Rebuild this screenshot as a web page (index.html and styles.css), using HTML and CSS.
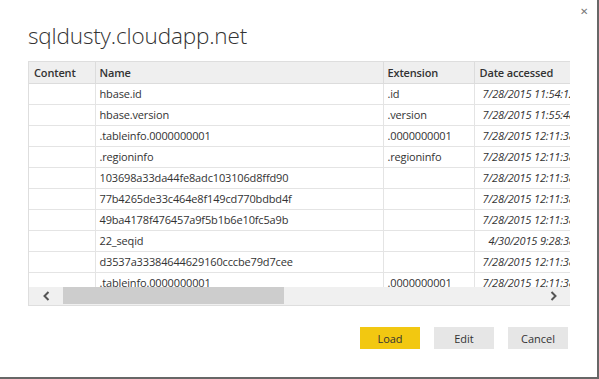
FILE: index.html
```html
<!DOCTYPE html>
<html lang="en">
<head>
  <meta charset="UTF-8" />
  <title>sqldusty.cloudapp.net</title>
  <link rel="stylesheet" href="styles.css">
</head>
<body>
  <div class="dialog">
    <button class="close-btn" title="Close">&#x2715;</button>
    <h1 class="title">sqldusty.cloudapp.net</h1>

    <div class="grid">
      <div class="grid-view">
        <table class="files">
          <thead>
            <tr>
              <th class="col-content">Content</th>
              <th class="col-name">Name</th>
              <th class="col-ext">Extension</th>
              <th class="col-date">Date accessed</th>
            </tr>
          </thead>
          <tbody>
            <tr><td></td><td>hbase.id</td><td>.id</td><td class="date">7/28/2015 11:54:12 AM</td></tr>
            <tr><td></td><td>hbase.version</td><td>.version</td><td class="date">7/28/2015 11:55:48 AM</td></tr>
            <tr><td></td><td>.tableinfo.0000000001</td><td>.0000000001</td><td class="date">7/28/2015 12:11:38 PM</td></tr>
            <tr><td></td><td>.regioninfo</td><td>.regioninfo</td><td class="date">7/28/2015 12:11:38 PM</td></tr>
            <tr><td></td><td>103698a33da44fe8adc103106d8ffd90</td><td></td><td class="date">7/28/2015 12:11:38 PM</td></tr>
            <tr><td></td><td>77b4265de33c464e8f149cd770bdbd4f</td><td></td><td class="date">7/28/2015 12:11:38 PM</td></tr>
            <tr><td></td><td>49ba4178f476457a9f5b1b6e10fc5a9b</td><td></td><td class="date">7/28/2015 12:11:38 PM</td></tr>
            <tr><td></td><td>22_seqid</td><td></td><td class="date">4/30/2015 9:28:38 AM</td></tr>
            <tr><td></td><td>d3537a33384644629160cccbe79d7cee</td><td></td><td class="date">7/28/2015 12:11:38 PM</td></tr>
            <tr><td></td><td>.tableinfo.0000000001</td><td>.0000000001</td><td class="date">7/28/2015 12:11:38 PM</td></tr>
          </tbody>
        </table>
      </div>

      <!-- horizontal scrollbar -->
      <div class="hscroll">
        <span class="arrow">
          <svg width="9" height="10" viewBox="0 0 9 10"><path d="M6.5 1 L2.5 5 L6.5 9" fill="none" stroke="#555" stroke-width="2"/></svg>
        </span>
        <div class="track"><div class="thumb"></div></div>
        <span class="arrow">
          <svg width="9" height="10" viewBox="0 0 9 10"><path d="M2.5 1 L6.5 5 L2.5 9" fill="none" stroke="#555" stroke-width="2"/></svg>
        </span>
      </div>
    </div>

    <div class="actions">
      <button class="btn btn-primary">Load</button>
      <button class="btn">Edit</button>
      <button class="btn">Cancel</button>
    </div>
  </div>
</body>
</html>
```

FILE: styles.css
```css
* {
  box-sizing: border-box;
  margin: 0;
  padding: 0;
}

body, html {
  height: 100%;
  background: #fff;
  font-family: 'Open Sans', 'Noto Sans', sans-serif;
  color: #333;
  overflow: hidden;
}

.dialog {
  position: relative;
  width: 599px;
  height: 379px;
  border-right: 2px solid #676767;
  border-bottom: 2px solid #676767;
  padding: 0 29px 0 28px;
}

.close-btn {
  position: absolute;
  top: 5px;
  right: 9px;
  border: none;
  background: none;
  color: #777;
  font-size: 10px;
  line-height: 14px;
  cursor: pointer;
}

.title {
  font-weight: 300;
  font-size: 22.5px;
  line-height: 30px;
  color: #333;
  padding-top: 21px;
  height: 61px;
  letter-spacing: -0.15px;
}

/* Grid */
.grid {
  width: 542px;
  border: 1px solid #dedede;
  border-right: none;
}

.grid-view {
  height: 225px;
  overflow: hidden;
}

.files {
  border-collapse: collapse;
  table-layout: fixed;
  width: 582px;
  font-size: 11px;
  letter-spacing: -0.15px;
}

.files th,
.files td {
  height: 21px;
  padding: 0 4px;
  text-align: left;
  white-space: nowrap;
  overflow: hidden;
  border-right: 1px solid #e4e4e4;
  border-bottom: 1px solid #e4e4e4;
}

.files th {
  background: #efefef;
  font-weight: 600;
  color: #333;
  border-right-color: #dcdcdc;
  border-bottom-color: #dcdcdc;
}

.files td {
  color: #333;
}

.col-content { width: 66px; padding-left: 5px !important; }
.col-name { width: 288px; }
.col-ext { width: 91px; }
.col-date { width: 137px; padding-left: 5px !important; }

.files td.date {
  font-style: italic;
  text-align: right;
  padding-right: 18px;
}

/* Scrollbar */
.hscroll {
  display: flex;
  align-items: center;
  height: 18px;
  background: #f0f0f0;
}

.arrow {
  width: 34px;
  display: flex;
  justify-content: center;
  align-items: center;
  height: 100%;
}

.track {
  flex: 1;
  height: 100%;
}

.thumb {
  width: 221px;
  height: 17px;
  background: #cdcdcd;
}

/* Buttons */
.actions {
  display: flex;
  justify-content: flex-end;
  gap: 14px;
  margin-top: 21px;
}

.btn {
  width: 60px;
  height: 22px;
  border: none;
  background: #e6e6e6;
  font-family: inherit;
  font-size: 11px;
  color: #333;
  cursor: pointer;
}

.btn-primary {
  background: #f2c811;
}
```
